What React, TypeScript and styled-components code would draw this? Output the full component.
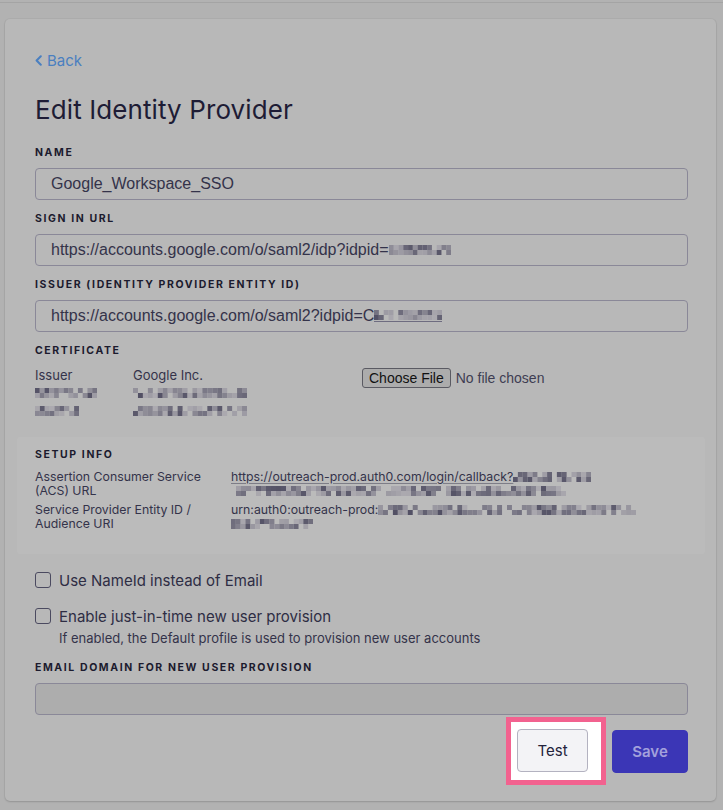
import React from "react";
import styled, { createGlobalStyle } from "styled-components";

const GlobalStyle = createGlobalStyle`
  html, body {
    margin: 0;
    padding: 0;
    background: #b2b2b2;
  }
  body {
    font-family: Inter, "Noto Sans", sans-serif;
    color: #1d1c33;
  }
`;

const Screen = styled.div`
  width: 723px;
  height: 810px;
  overflow: hidden;
  padding-top: 2px;
  box-sizing: border-box;
`;

const TopRule = styled.div`
  height: 1px;
  background: #a4a4a4;
`;

const Card = styled.div`
  margin: 16px 7px 0 5px;
  background: #b8b8b8;
  border-radius: 5px;
  box-shadow: 0 1px 2px rgba(0, 0, 0, 0.14), 0 0 0 1px rgba(0, 0, 0, 0.03);
  padding: 31px 28px 16px 30px;
`;

const BackLink = styled.a`
  display: inline-flex;
  align-items: center;
  gap: 5px;
  font-size: 15px;
  line-height: 18px;
  color: #4a7fc0;
  text-decoration: none;
  cursor: pointer;
`;

const Title = styled.h1`
  margin: 24px 0 20px;
  font-size: 26px;
  line-height: 32px;
  font-weight: 400;
  color: #1e1c35;
  letter-spacing: 0.1px;
`;

const Label = styled.div`
  font-size: 10.5px;
  line-height: 14px;
  font-weight: 700;
  letter-spacing: 1.6px;
  text-transform: uppercase;
  color: #1c1b2e;
  margin-bottom: 8px;
`;

const Field = styled.div`
  margin-bottom: 12px;
`;

const TextBox = styled.div<{ $disabled?: boolean }>`
  display: flex;
  align-items: center;
  height: 32px;
  box-sizing: border-box;
  padding: 0 15px;
  border: 1px solid #8a8898;
  border-radius: 4px;
  background: ${(p) => (p.$disabled ? "#adadad" : "transparent")};
  font-family: "Liberation Sans", Arial, sans-serif;
  font-size: 16px;
  color: #34334a;
  white-space: nowrap;
  overflow: hidden;
`;

const Underlined = styled.span`
  display: inline-flex;
  border-bottom: 1px solid #6e6c80;
  padding-bottom: 1px;
`;

const CertGrid = styled.div`
  display: grid;
  grid-template-columns: 98px 229px auto;
  margin-top: 7.5px;
  font-size: 13px;
  line-height: 18px;
  color: #34334a;
`;

const CertColumn = styled.div`
  display: flex;
  flex-direction: column;
`;

const BlurLine = styled.div`
  height: 18px;
  display: flex;
  align-items: center;
`;

const FilePicker = styled.div`
  display: flex;
  align-items: center;
  gap: 5px;
  height: 18px;
  margin-top: 3px;
  font-family: "Liberation Sans", Arial, sans-serif;
  font-size: 14px;
  color: #3e3d52;
`;

const FileButton = styled.button`
  height: 20px;
  padding: 0 6px;
  border: 1px solid #5a5a62;
  border-radius: 3px;
  background: #acacac;
  font-family: "Liberation Sans", Arial, sans-serif;
  font-size: 14px;
  color: #111;
`;

const SetupBox = styled.div`
  margin: 17px -17px 16px -18px;
  padding: 11px 17px 23px 18px;
  background: #bbbbbb;
  border-radius: 3px;
`;

const SetupGrid = styled.div`
  display: grid;
  grid-template-columns: 180px 1fr;
  column-gap: 16px;
  row-gap: 5px;
  font-size: 12.3px;
  line-height: 14px;
  color: #34334a;
`;

const SetupLabel = styled.div``;

const SetupValue = styled.div`
  display: flex;
  flex-direction: column;
`;

const ValueLine = styled.div<{ $indent?: number }>`
  display: flex;
  align-items: center;
  height: 14px;
  padding-left: ${(p) => p.$indent ?? 0}px;
  white-space: nowrap;
`;

const LinkText = styled.span`
  text-decoration: underline;
  text-decoration-color: rgba(52, 51, 74, 0.45);
  text-underline-offset: 2px;
`;

const CheckRow = styled.label`
  display: flex;
  align-items: center;
  gap: 8px;
  height: 20px;
  font-size: 15px;
  color: #2e2d44;
  & + & {
    margin-top: 16px;
  }
`;

const Box = styled.span`
  width: 16px;
  height: 16px;
  box-sizing: border-box;
  border: 1px solid #4b4a60;
  border-radius: 3px;
  flex: none;
`;

const Helper = styled.div`
  margin: 4px 0 15px 24px;
  font-size: 13px;
  line-height: 16px;
  color: #34334a;
`;

const Actions = styled.div`
  display: flex;
  justify-content: flex-end;
  align-items: center;
  margin-top: 2px;
`;

const Highlight = styled.div`
  background: #ffffff;
  border: 5px solid #f2628f;
  padding: 7px 13px 8px 6px;
`;

const Button = styled.button<{ $primary?: boolean }>`
  height: 43px;
  box-sizing: border-box;
  border-radius: 4px;
  font-family: Inter, "Noto Sans", sans-serif;
  font-size: 15px;
  cursor: pointer;
  ${(p) =>
    p.$primary
      ? `
    width: 76px;
    margin-left: 6px;
    background: #3b36b6;
    border: 1px solid #3b36b6;
    color: #a3a1dc;
    font-weight: 600;
  `
      : `
    width: 71px;
    background: #f3f3f6;
    border: 1px solid #b3b2c0;
    color: #24233c;
    font-weight: 400;
  `}
`;

const BlurSvg = styled.svg`
  display: inline-block;
  flex: none;
  vertical-align: middle;
`;

// pixelated (redacted) text
const Blur = ({ width, height = 10, seed = 1 }: { width: number; height?: number; seed?: number }) => {
  const cell = 5;
  const cols = Math.ceil(width / cell);
  const rows = Math.ceil(height / cell);
  let s = (seed * 7919) % 233280;
  const rand = () => {
    s = (s * 9301 + 49297) % 233280;
    return s / 233280;
  };
  const rects: React.ReactNode[] = [];
  for (let r = 0; r < rows; r++) {
    for (let c = 0; c < cols; c++) {
      const v = rand();
      if (v < 0.2) continue;
      const t = Math.pow(rand(), 1.3);
      const g = Math.round(172 - t * 90);
      const b = Math.round(176 - t * 76);
      rects.push(
        <rect key={`${r}-${c}`} x={c * cell} y={r * cell} width={cell} height={cell} fill={`rgb(${g},${g - 2},${b})`} />
      );
    }
  }
  return (
    <BlurSvg width={width} height={rows * cell} viewBox={`0 0 ${cols * cell} ${rows * cell}`} preserveAspectRatio="none">
      {rects}
    </BlurSvg>
  );
};

const Chevron = () => (
  <svg width="7" height="11" viewBox="0 0 7 11">
    <path d="M5.8 1.2 1.6 5.5l4.2 4.3" fill="none" stroke="#4a7fc0" strokeWidth="2" strokeLinecap="round" strokeLinejoin="round" />
  </svg>
);

const App = () => {
  return (
    <Screen>
      <GlobalStyle />
      <TopRule />
      <Card>
        <BackLink>
          <Chevron />
          Back
        </BackLink>
        <Title>Edit Identity Provider</Title>

        <Field>
          <Label>Name</Label>
          <TextBox>Google_Workspace_SSO</TextBox>
        </Field>
        <Field>
          <Label>Sign in URL</Label>
          <TextBox>
            https://accounts.google.com/o/saml2/idp?idpid=
            <Blur width={62} seed={3} />
          </TextBox>
        </Field>
        <Field>
          <Label>Issuer (Identity Provider Entity ID)</Label>
          <TextBox>
            https://accounts.google.com/o/saml2?idpid=C
            <Underlined>
              <Blur width={68} seed={7} />
            </Underlined>
          </TextBox>
        </Field>

        <Label>Certificate</Label>
        <CertGrid>
          <CertColumn>
            <div>Issuer</div>
            <BlurLine>
              <Blur width={62} height={8} seed={11} />
            </BlurLine>
            <BlurLine>
              <Blur width={44} height={8} seed={13} />
            </BlurLine>
          </CertColumn>
          <CertColumn>
            <div>Google Inc.</div>
            <BlurLine>
              <Blur width={114} height={8} seed={17} />
            </BlurLine>
            <BlurLine>
              <Blur width={114} height={8} seed={19} />
            </BlurLine>
          </CertColumn>
          <FilePicker>
            <FileButton>Choose File</FileButton>
            No file chosen
          </FilePicker>
        </CertGrid>

        <SetupBox>
          <Label>Setup Info</Label>
          <SetupGrid>
            <SetupLabel>Assertion Consumer Service (ACS) URL</SetupLabel>
            <SetupValue>
              <ValueLine>
                <LinkText>https://outreach-prod.auth0.com/login/callback?</LinkText>
                <Blur width={78} seed={23} />
              </ValueLine>
              <ValueLine $indent={5}>
                <Blur width={330} height={8} seed={29} />
              </ValueLine>
            </SetupValue>
            <SetupLabel>Service Provider Entity ID / Audience URI</SetupLabel>
            <SetupValue>
              <ValueLine>
                urn:auth0:outreach-prod:
                <Blur width={258} seed={31} />
              </ValueLine>
              <ValueLine>
                <Blur width={82} height={8} seed={37} />
              </ValueLine>
            </SetupValue>
          </SetupGrid>
        </SetupBox>

        <CheckRow>
          <Box />
          Use NameId instead of Email
        </CheckRow>
        <CheckRow>
          <Box />
          Enable just-in-time new user provision
        </CheckRow>
        <Helper>If enabled, the Default profile is used to provision new user accounts</Helper>

        <Label>Email domain for new user provision</Label>
        <TextBox $disabled />

        <Actions>
          <Highlight>
            <Button>Test</Button>
          </Highlight>
          <Button $primary>Save</Button>
        </Actions>
      </Card>
    </Screen>
  );
};

export default App;
